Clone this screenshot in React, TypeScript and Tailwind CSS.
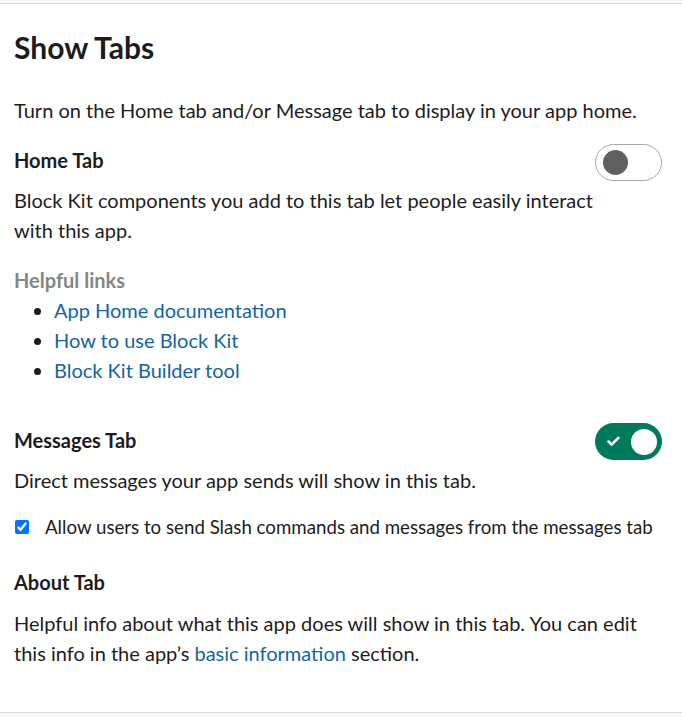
import { Check } from 'lucide-react'

function Toggle({ on }: { on: boolean }) {
  if (on) {
    return (
      <div className="flex h-[37px] w-[67px] items-center justify-between rounded-full bg-[#007a5a] pl-[11px] pr-[5px]">
        <Check className="h-[15px] w-[15px] text-white" strokeWidth={4} />
        <div className="h-[26px] w-[26px] rounded-full bg-white" />
      </div>
    )
  }
  return (
    <div className="flex h-[37px] w-[67px] items-center rounded-full border border-[#a8a8a8] bg-white pl-[7px]">
      <div className="h-[25px] w-[25px] rounded-full bg-[#616061]" />
    </div>
  )
}

export default function App() {
  return (
    <div className="min-h-screen bg-[#f8f8f8] pt-[3px] text-[#1d1c1d]" style={{ fontFamily: 'Lato, "Noto Sans", sans-serif' }}>
      <div className="border-y border-[#dddddd] bg-white px-[14px] pb-[44px] pt-[23px]">
        {/* Heading */}
        <h1 className="text-[30px] font-bold leading-[40px]">Show Tabs</h1>

        <p className="mt-[28px] text-[20px] leading-[30px]">
          Turn on the Home tab and/or Message tab to display in your app home.
        </p>

        {/* Home tab */}
        <div className="mt-[19px] flex items-start justify-between pr-[6px]">
          <h2 className="mt-px text-[20px] font-bold leading-[30px]">Home Tab</h2>
          <Toggle on={false} />
        </div>
        <p className="mt-[4px] max-w-[600px] text-[20px] leading-[30px]">
          Block Kit components you add to this tab let people easily interact with this app.
        </p>

        <div className="mt-[20px] text-[20px] font-bold leading-[30px] text-[#868686]">Helpful links</div>
        <ul className="list-disc pl-[40px] text-[20px] leading-[30px] marker:text-[#1d1c1d]">
          <li><a className="text-[#1264a3]">App Home documentation</a></li>
          <li><a className="text-[#1264a3]">How to use Block Kit</a></li>
          <li><a className="text-[#1264a3]">Block Kit Builder tool</a></li>
        </ul>

        {/* Messages tab */}
        <div className="mt-[38px] flex items-start justify-between pr-[6px]">
          <h2 className="mt-[2px] text-[20px] font-bold leading-[30px]">Messages Tab</h2>
          <Toggle on />
        </div>
        <p className="mt-[5px] text-[20px] leading-[30px]">Direct messages your app sends will show in this tab.</p>

        <label className="mt-[17px] flex items-center gap-[16px] whitespace-nowrap text-[18.7px] leading-[30px]">
          <input type="checkbox" defaultChecked className="ml-px h-[14px] w-[14px] shrink-0 accent-[#0075ff]" />
          Allow users to send Slash commands and messages from the messages tab
        </label>

        {/* About tab */}
        <h2 className="mt-[25px] text-[20px] font-bold leading-[30px]">About Tab</h2>
        <p className="mt-[11px] text-[20px] leading-[30px]">
          Helpful info about what this app does will show in this tab. You can edit this info in the app’s{' '}
          <a className="text-[#1264a3]">basic information</a> section.
        </p>
      </div>
    </div>
  )
}
